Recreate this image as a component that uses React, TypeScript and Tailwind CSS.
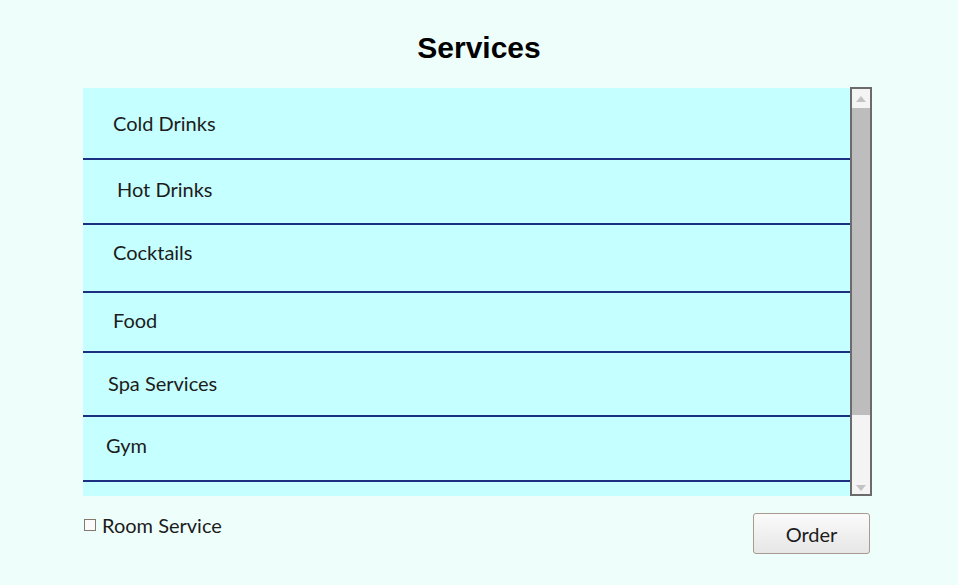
import React from 'react';

const rows: { label: string; cls: string }[] = [
  { label: 'Cold Drinks', cls: 'h-[72px] pl-[30px]' },
  { label: 'Hot Drinks', cls: 'h-[65px] pl-[34px] pb-[5px]' },
  { label: 'Cocktails', cls: 'h-[68px] pl-[30px] pb-[12px]' },
  { label: 'Food', cls: 'h-[60px] pl-[30px] pb-[4px]' },
  { label: 'Spa Services', cls: 'h-[64px] pl-[25px] pb-[2px]' },
  { label: 'Gym', cls: 'h-[65px] pl-[23px] pb-[7px]' },
];

function Scrollbar() {
  return (
    <div className="flex h-[409px] w-[22px] shrink-0 -mt-[1px] flex-col border-2 border-[#6b6b6b] bg-[#f4f4f4]">
      <div className="flex h-[19px] items-center justify-center">
        <svg width="10" height="6" viewBox="0 0 10 6">
          <path d="M0 6 L5 0 L10 6 Z" fill="#c3c3c3" />
        </svg>
      </div>
      <div className="h-[307px] bg-[#bdbdbd]" />
      <div className="flex flex-1 items-end justify-center pb-[3px]">
        <svg width="10" height="6" viewBox="0 0 10 6">
          <path d="M0 0 L10 0 L5 6 Z" fill="#c3c3c3" />
        </svg>
      </div>
    </div>
  );
}

export default function App() {
  return (
    <div className="min-h-screen bg-[#eefffb] font-['Lato','Noto_Sans',sans-serif] text-[#1c1c1c]">
      <h1 className="pt-[30px] text-center font-['Liberation_Sans',Arial,sans-serif] text-[30px] font-bold leading-[36px] text-black">
        Services
      </h1>

      <div className="ml-[83px] mt-[22px] w-[789px]">
        <div className="flex">
          <div className="h-[408px] flex-1 overflow-hidden bg-[#c6ffff]">
            {rows.map((r) => (
              <div
                key={r.label}
                className={`box-border flex items-center border-b-2 border-[#1b2e80] text-[20px] ${r.cls}`}
              >
                {r.label}
              </div>
            ))}
            <div className="h-[60px]" />
          </div>
          <Scrollbar />
        </div>

        <div className="flex items-start justify-between pr-[2px] pt-[17px]">
          <label className="ml-px mt-px flex h-[22px] items-center gap-[6px] text-[20px] leading-[22px]">
            <span className="h-[12px] w-[12px] border border-[#85786f] bg-[#fbfbfb]" />
            Room Service
          </label>
          <button className="h-[41px] w-[117px] rounded-[3px] border border-[#a89a8e] bg-gradient-to-b from-[#fbfbfb] to-[#e6e6e6] pt-px text-[20px] text-[#1c1c1c]">
            Order
          </button>
        </div>
      </div>
    </div>
  );
}
